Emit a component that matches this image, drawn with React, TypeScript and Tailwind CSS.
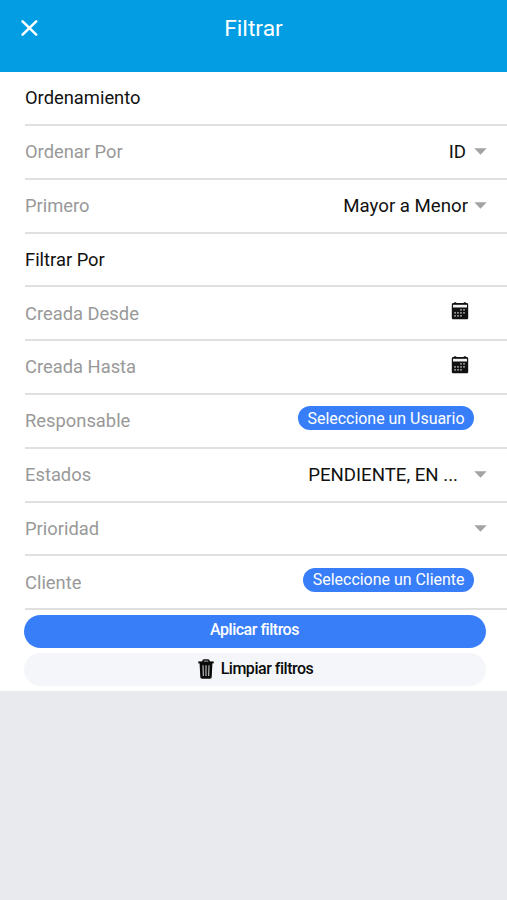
import type { ReactNode } from "react"

function CloseIcon() {
  return (
    <svg width="17" height="16" viewBox="0 0 17 16" fill="none" stroke="white" strokeWidth="2.5" strokeLinecap="round">
      <path d="M1.6 1.4 15.2 14.6M15.2 1.4 1.6 14.6" />
    </svg>
  )
}

function Caret() {
  return (
    <svg className="ml-[6px] shrink-0" width="13" height="7" viewBox="0 0 13 7" fill="#a3a3a3">
      <path d="M0.3 0.2h12.4L6.5 6.8z" />
    </svg>
  )
}

function CalendarIcon() {
  return (
    <svg width="18" height="18" viewBox="0 0 18 18">
      <path
        d="M2.4 1.1h.8V.2h2v.9h7.6V.2h2v.9h.8c.9 0 1.6.7 1.6 1.6v13c0 .9-.7 1.6-1.6 1.6H2.4c-.9 0-1.6-.7-1.6-1.6v-13c0-.9.7-1.6 1.6-1.6z"
        fill="#111"
      />
      <path d="M2 2.8h14v2.7H2z" fill="#f1f1f1" />
      <path
        d="M9.2 7.2h1.6v1.4H9.2zM12.2 7.2h1.6v1.4h-1.6zM3.3 10.2h1.6v1.4H3.3zM6.2 10.2h1.6v1.4H6.2zM9.2 10.2h1.6v1.4H9.2zM12.2 10.2h1.6v1.4h-1.6zM3.3 13.2h1.6v1.4H3.3zM6.2 13.2h1.6v1.4H6.2zM9.2 13.2h1.6v1.4H9.2z"
        fill="#d4d4d4"
      />
    </svg>
  )
}

function TrashIcon() {
  return (
    <svg width="16" height="20" viewBox="0 0 16 20" fill="none" stroke="#0b0b0b">
      <path d="M5 3V1.9c0-.6.4-1 1-1h4c.6 0 1 .4 1 1V3" strokeWidth="1.5" />
      <path d="M.3 3.4h15.4" strokeWidth="2" />
      <path d="M2.3 4.5 3 18c0 .6.5 1 1 1h8c.5 0 1-.4 1-1l.7-13.5z" fill="#0b0b0b" strokeWidth="1.4" />
      <path d="m5 6.2.4 10.8M8 6.2V17M11 6.2l-.4 10.8" stroke="#b4b6b9" strokeWidth="1.2" />
    </svg>
  )
}

function Pill({ children }: { children: ReactNode }) {
  return (
    <button className="mr-[13px] mb-[5px] h-6 rounded-full bg-[#387ef9] px-[9.5px] text-[15.95px] leading-[23px] whitespace-nowrap text-white">
      {children}
    </button>
  )
}

function Row({ label, heading, children }: { label: string; heading?: boolean; children?: ReactNode }) {
  return (
    <div className="ml-[25px] flex h-[53.8px] items-center justify-between border-b-2 border-[#e0e0e0] pr-[20px]">
      <span className={heading ? "text-[#111]" : "text-[#999]"}>{label}</span>
      <div className="flex items-center text-[18.65px] leading-7 text-[#111]">{children}</div>
    </div>
  )
}

export default function App() {
  return (
    <div className="h-[900px] w-[507px] overflow-hidden bg-[#e9eaed] font-[Roboto,sans-serif] text-[18.35px]">
      <header className="grid h-[72px] grid-cols-[1fr_auto_1fr] bg-[#039de4] pb-[15px] text-white">
        <button className="flex items-center pb-px pl-[21px]">
          <CloseIcon />
        </button>
        <h1 className="self-center pt-px text-[22.8px]">Filtrar</h1>
      </header>

      <main className="h-[619px] bg-white pt-[0.3px]">
        <Row label="Ordenamiento" heading />
        <Row label="Ordenar Por">
          <span className="mr-[2px]">ID</span>
          <Caret />
        </Row>
        <Row label="Primero">
          Mayor a Menor <Caret />
        </Row>
        <Row label="Filtrar Por" heading />
        <Row label="Creada Desde">
          <span className="mr-[18px] mb-1">
            <CalendarIcon />
          </span>
        </Row>
        <Row label="Creada Hasta">
          <span className="mr-[18px] mb-1">
            <CalendarIcon />
          </span>
        </Row>
        <Row label="Responsable">
          <Pill>Seleccione un Usuario</Pill>
        </Row>
        <Row label="Estados">
          <span className="mr-[10px]">PENDIENTE, EN ...</span>
          <Caret />
        </Row>
        <Row label="Prioridad">
          <Caret />
        </Row>
        <Row label="Cliente">
          <Pill>Seleccione un Cliente</Pill>
        </Row>

        <div className="flex flex-col gap-[5px] pt-[4.5px] pr-[21px] pl-[24px] text-[16px] font-medium tracking-[-0.48px]">
          <button className="h-[33px] rounded-full bg-[#387ef9] pr-px pb-[2px] text-white">Aplicar filtros</button>
          <button className="flex h-[33px] items-center justify-center gap-[7px] rounded-full bg-[#f4f6f9] pb-px pl-px text-[#0b0b0b]">
            <TrashIcon />
            Limpiar filtros
          </button>
        </div>
      </main>
    </div>
  )
}
